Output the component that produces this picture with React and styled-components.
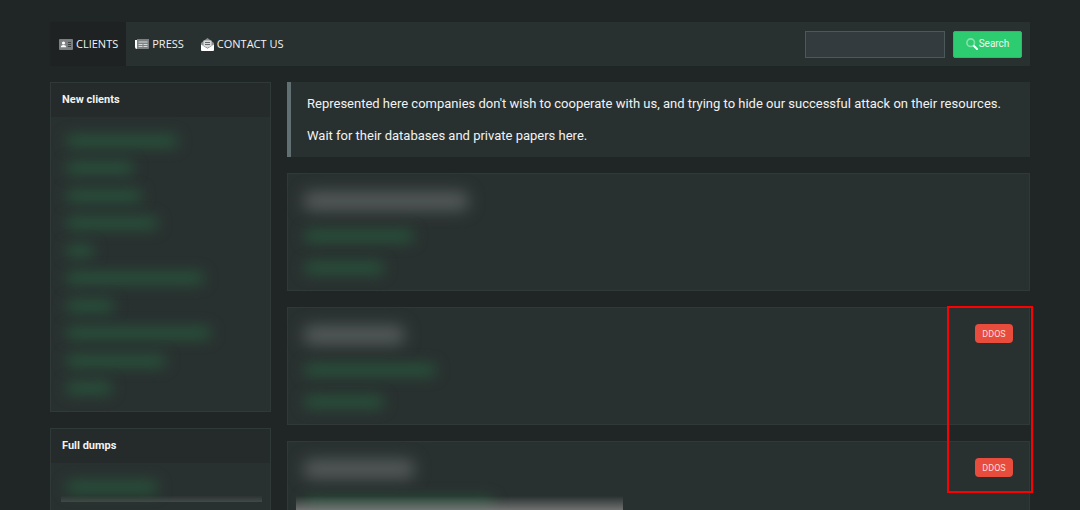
import React from "react";
import styled, { createGlobalStyle } from "styled-components";

const Global = createGlobalStyle`
  * { box-sizing: border-box; }
  body { margin: 0; background: #202525; color: #f1f3f3; font: 13px/20px Roboto, "Open Sans", sans-serif; }
  ul { list-style: none; margin: 0; padding: 0; }
  h2, h3, p { margin: 0; }
`;
const Page = styled.div`
  height: 100vh; overflow: hidden; padding: 22px 50px 0;
  display: flex; flex-direction: column; gap: 16px;
`;
const NavBar = styled.nav`
  display: flex; flex: none; align-items: center; height: 44px;
  background: #293130; padding-right: 8px;
`;
const NavLink = styled.a`
  display: flex; align-items: center; gap: 3px; height: 44px; padding: 0 8px 0 9px;
  color: #f1f3f3; text-decoration: none; font: 11px/20px "Open Sans", sans-serif;
  background: ${(p) => (p.$active ? "#1e2223" : "transparent")};
  svg { flex: none; }
`;
const SearchForm = styled.form`
  display: flex; gap: 8px; margin-left: auto;
`;
const SearchInput = styled.input`
  width: 140px; height: 27px; background: #343b3e; border: 1px solid #4c595b; color: #f1f3f3;
`;
const SearchButton = styled.button`
  display: flex; align-items: center; justify-content: center; gap: 1px;
  width: 69px; height: 27px; padding: 0; border: 1px solid #2bbb67; border-radius: 2px;
  background: #2ecc71; color: #f1f3f3; font: 10px/16px Roboto, sans-serif;
`;
const Columns = styled.div`
  display: grid; grid-template-columns: 221px minmax(0, 1fr); gap: 16px; align-items: start;
`;
const Stack = styled.div`
  display: flex; flex-direction: column; gap: 16px;
`;
const Panel = styled.section`
  border: 1px solid #303838; background: #293130;
`;
const PanelTitle = styled.h2`
  height: 34px; padding: 0 11px; background: #252a2a; font-size: 11px; font-weight: 700; line-height: 34px;
`;
const ClientList = styled.ul`
  display: grid; grid-auto-rows: 1fr; height: 275px; margin: 10px 15px 9px;
  li { display: flex; align-items: center; }
`;
const Redacted = styled.span`
  display: block; width: ${(p) => p.$w}px; height: ${(p) => (p.$title ? 18 : 12)}px;
  border-radius: 6px;
  background: ${(p) => (p.$title ? "#565c5c" : "#28543c")};
  filter: blur(${(p) => (p.$title ? 8 : 7)}px);
`;
const DumpBox = styled.div`
  height: 33px; margin: 6px 8px 40px 10px; padding: 12px 5px;
  background: linear-gradient(transparent 80%, #434949);
`;
const Notice = styled.section`
  border-left: 4px solid #607073; background: #293130; padding: 12px 16px 11px;
  display: flex; flex-direction: column; gap: 12px;
`;
const Card = styled.article`
  display: flex; justify-content: space-between; align-items: flex-start;
  height: 118px; padding: 16px; border: 1px solid #303838; background: #293130;
`;
const CardLines = styled.div`
  display: flex; flex-direction: column; gap: 20px; padding-top: 2px;
`;
const Flagged = styled(Stack)`
  position: relative;
`;
const Highlight = styled.div`
  position: absolute; top: -1px; right: -3px; width: 86px; height: 187px; border: 2px solid #fa0202;
`;
const Fade = styled.div`
  position: absolute; left: 9px; bottom: 49px; width: 327px; height: 14px;
  background: linear-gradient(#80808000, #808080cc);
`;
const Badge = styled.span`
  width: 38px; height: 19px; border-radius: 4px; background: #e74c3c; color: #fbdcd8;
  text-align: center; font-size: 9px; line-height: 20px;
`;

const IdCard = () => (
  <svg width="14" height="11" viewBox="0 0 14 11">
    <rect width="14" height="11" rx="1" fill="#7c8080" />
    <circle cx="4.5" cy="4" r="1.6" fill="#fff" />
    <path d="M1.8 8.2c0-3 5.4-3 5.4 0z" fill="#fff" />
    <path d="M9 3.5h3M9 5.5h3M9 7.5h3" stroke="#3a4040" />
  </svg>
);
const Newspaper = () => (
  <svg width="14" height="10" viewBox="0 0 14 10">
    <path d="M2 0h12v9q0 1-1 1H2z" fill="#7c8080" />
    <path d="M0 1h2v9Q0 10 0 8z" fill="#fff" />
    <path d="M3.5 3h9M3.5 5.5h4M8.5 5.5h4M3.5 7.5h4M8.5 7.5h4" stroke="#d6d9d9" />
  </svg>
);
const Mail = () => (
  <svg width="13" height="13" viewBox="0 0 13 13">
    <path d="M0 5l6.5-5L13 5v3H0z" fill="#8b9090" />
    <path d="M2.5 2.5h8V8l-4 2-4-2z" fill="#d8dada" />
    <path d="M4 4.5h5M4 6.5h5" stroke="#626868" />
    <path d="M0 6.5l6.5 4 6.5-4V12q0 1-1 1H1q-1 0-1-1z" fill="#fff" />
  </svg>
);
const Magnifier = () => (
  <svg width="12" height="12" viewBox="0 0 12 12">
    <circle cx="4.7" cy="4.7" r="3.8" fill="none" stroke="#85e2ac" strokeWidth="1.6" />
    <path d="M8 8l3 3" stroke="#fff" strokeWidth="2" strokeLinecap="round" />
  </svg>
);

const clients = [112, 68, 76, 92, 28, 138, 48, 145, 100, 46];

const ClientCard = ({ lines, badge }) => (
  <Card>
    <CardLines>
      {lines.map((w, i) => <Redacted key={i} $w={w} $title={i === 0} />)}
    </CardLines>
    {badge && <Badge>{badge}</Badge>}
  </Card>
);

export default function App() {
  return (
    <Page>
      <Global />
      <NavBar>
        <NavLink href="#clients" $active><IdCard />CLIENTS</NavLink>
        <NavLink href="#press"><Newspaper />PRESS</NavLink>
        <NavLink href="#contact"><Mail />CONTACT US</NavLink>
        <SearchForm>
          <SearchInput type="search" aria-label="Search" />
          <SearchButton type="button"><Magnifier />Search</SearchButton>
        </SearchForm>
      </NavBar>
      <Columns>
        <Stack>
          <Panel>
            <PanelTitle>New clients</PanelTitle>
            <ClientList>
              {clients.map((w, i) => <li key={i}><Redacted $w={w} /></li>)}
            </ClientList>
          </Panel>
          <Panel>
            <PanelTitle>Full dumps</PanelTitle>
            <DumpBox><Redacted $w={92} /></DumpBox>
          </Panel>
        </Stack>
        <Stack>
          <Notice>
            <p>Represented here companies don't wish to cooperate with us, and trying to hide our successful attack on their resources.</p>
            <p>Wait for their databases and private papers here.</p>
          </Notice>
          <ClientCard lines={[164, 110, 80]} />
          <Flagged>
            <ClientCard lines={[100, 132, 80]} badge="DDOS" />
            <ClientCard lines={[110, 190]} badge="DDOS" />
            <Fade />
            <Highlight />
          </Flagged>
        </Stack>
      </Columns>
    </Page>
  );
}
